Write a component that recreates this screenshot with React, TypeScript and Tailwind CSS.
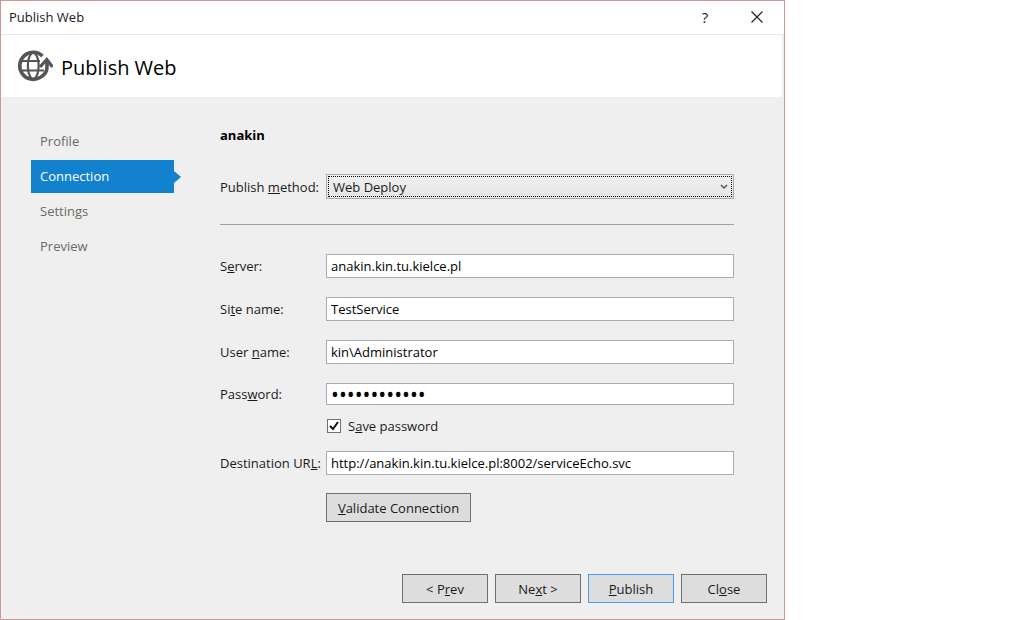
import React from "react"

interface FieldProps {
    id: string;
    label: React.ReactNode;
    value: string;
    type?: string;
    className?: string;
}

const steps = ["Profile", "Connection", "Settings", "Preview"]

function GlobeIcon() {
    return (
        <svg width="36" height="34" viewBox="0 0 36 34" fill="none" stroke="#555" aria-hidden="true">
            <path d="M25.5 7A13.500 13.500 0 1 0 23 28.500Q30 25 30 18V12" strokeWidth="3.600" />
            <path d="M23 18L29.800 10.500L35.500 18" strokeWidth="3.200" />
            <path d="M15 4C9.500 9 9.500 24 15 30M17.500 4C23 9 23 24 17.500 30M3 12H23M3 21.500H27" strokeWidth="2.200" />
        </svg>
    )
}

function Field({ id, label, value, type = "text", className = "h-6" }: FieldProps) {
    return (
        <div className="flex items-center">
            <label htmlFor={id} className="w-[106px] shrink-0 whitespace-nowrap">{label}</label>
            <input
                id={id}
                type={type}
                defaultValue={value}
                className={`min-w-0 flex-1 border border-[#abadb3] bg-white px-1 text-black outline-none ${className}`}
            />
        </div>
    )
}

function DialogButton({ children, primary = false }: { children: React.ReactNode; primary?: boolean }) {
    return (
        <button
            type="button"
            className={`h-[29px] w-[86px] border bg-[#ddd] ${primary ? "border-[#4a9be8]" : "border-[#707070]"}`}
        >
            {children}
        </button>
    )
}

export default function App() {
    const [step, setStep] = React.useState("Connection")
    const [savePassword, setSavePassword] = React.useState(true)

    return (
        <div className="min-h-screen bg-white font-['Open_Sans',sans-serif] text-[13px] leading-5 text-[#1a1a1a]">
            <div className="flex min-h-screen w-full max-w-[785px] flex-col border border-[#cf9696] bg-[#efefef]">
                <div className="flex h-[34px] items-center border-b border-[#e8e8e8] bg-white pb-[2px] pl-2">
                    <span className="flex-1">Publish Web</span>
                    <button type="button" aria-label="Help" className="h-full w-[50px] text-[15px]">?</button>
                    <button type="button" aria-label="Close window" className="flex h-full w-[54px] items-center justify-center">
                        <svg width="12" height="12" viewBox="0 0 12 12" stroke="#222" strokeWidth="1.200">
                            <path d="M.5 .5L11.500 11.500M11.500 .5L.5 11.500" />
                        </svg>
                    </button>
                </div>

                <header className="mr-[2px] flex h-[62px] items-center gap-2 bg-white pl-4">
                    <GlobeIcon />
                    <h1 className="pt-[3px] text-[20px] leading-6 text-black">Publish Web</h1>
                </header>

                <div className="flex flex-1">
                    <nav className="flex w-[173px] shrink-0 flex-col gap-[2px] pt-7 pl-[30px]">
                        {steps.map((name) => (
                            <button
                                key={name}
                                type="button"
                                onClick={() => setStep(name)}
                                className={`relative h-[33px] pb-[2px] pl-[9px] text-left ${step === name ? "bg-[#1382ce] text-white" : "text-[#6a6a6a]"}`}
                            >
                                {name}
                                {step === name && (
                                    <span className="absolute top-1/2 left-full -translate-y-1/2 border-y-[6px] border-l-[7px] border-y-transparent border-l-[#1382ce]" />
                                )}
                            </button>
                        ))}
                    </nav>

                    <main className="min-w-0 flex-1 pt-7 pr-[50px] pl-[46px]">
                        <h2 className="font-bold text-black">anakin</h2>

                        <div className="mt-[29px] flex items-center">
                            <label htmlFor="method" className="w-[106px] shrink-0 whitespace-nowrap">Publish <u>m</u>ethod:</label>
                            <div className="relative min-w-0 flex-1">
                                <select
                                    id="method"
                                    className="block h-[25px] w-full appearance-none border border-[#acacac] bg-linear-to-b from-[#f0f0f0] to-[#e5e5e5] px-[6px] outline-1 -outline-offset-3 outline-black outline-dotted"
                                >
                                    <option>Web Deploy</option>
                                </select>
                                <svg className="pointer-events-none absolute top-[10px] right-[6px]" width="8" height="6" viewBox="0 0 8 6" fill="none" stroke="#555" strokeWidth="1.500">
                                    <path d="M1 1L4 4L7 1" />
                                </svg>
                            </div>
                        </div>

                        <hr className="mt-[25px] mb-[29px] border-[#a0a0a0]" />

                        <div className="flex flex-col gap-[19px]">
                            <Field id="server" label={<>S<u>e</u>rver:</>} value="anakin.kin.tu.kielce.pl" />
                            <Field id="site" label={<>Si<u>t</u>e name:</>} value="TestService" />
                            <Field id="user" label={<>User <u>n</u>ame:</>} value="kin\Administrator" />
                            <Field id="password" type="password" label={<>Pass<u>w</u>ord:</>} value="servicepass1" className="h-[22px] text-[21px]" />
                        </div>

                        <div className="mt-[11px] mb-[15px] flex items-center pl-[107px]">
                            <span className="relative mr-[7px] h-[14px] w-[14px]">
                                <input
                                    id="save"
                                    type="checkbox"
                                    checked={savePassword}
                                    onChange={(e) => setSavePassword(e.target.checked)}
                                    className="block h-[14px] w-[14px] appearance-none border border-[#707070] bg-white"
                                />
                                {savePassword && (
                                    <svg className="pointer-events-none absolute inset-0" width="14" height="14" viewBox="0 0 14 14" fill="none" stroke="#111" strokeWidth="2">
                                        <path d="M3 7L6 10L11 3" />
                                    </svg>
                                )}
                            </span>
                            <label htmlFor="save">S<u>a</u>ve password</label>
                        </div>

                        <Field id="url" label={<>Destination UR<u>L</u>:</>} value="http://anakin.kin.tu.kielce.pl:8002/serviceEcho.svc" />

                        <button type="button" className="mt-[18px] ml-[106px] h-[29px] w-[145px] border border-[#707070] bg-[#ddd]">
                            <u>V</u>alidate Connection
                        </button>
                    </main>
                </div>

                <footer className="flex justify-end gap-[7px] pr-[17px] pb-4">
                    <DialogButton>&lt; P<u>r</u>ev</DialogButton>
                    <DialogButton>Ne<u>x</u>t &gt;</DialogButton>
                    <DialogButton primary><u>P</u>ublish</DialogButton>
                    <DialogButton>Cl<u>o</u>se</DialogButton>
                </footer>
            </div>
        </div>
    )
}
